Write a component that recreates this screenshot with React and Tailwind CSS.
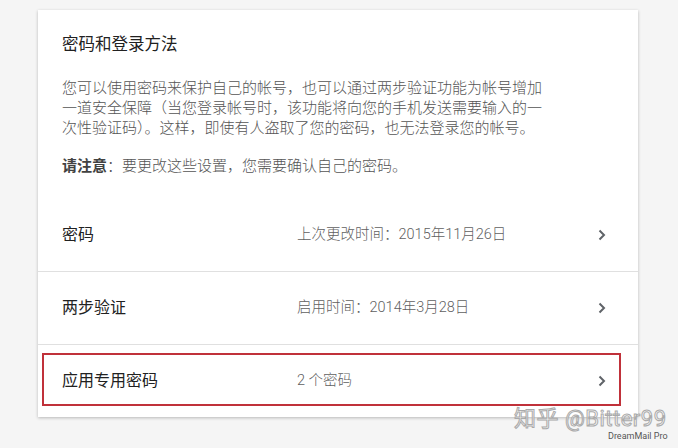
const font = { fontFamily: 'Roboto, "Noto Sans CJK SC", sans-serif' };

const Chevron = () => (
  <svg width="8" height="12" viewBox="0 0 8 12" className="text-[#5f6368]">
    <path d="M1.5 1.5 L6 6 L1.5 10.5" fill="none" stroke="currentColor" strokeWidth="2" />
  </svg>
);

const Row = ({ label, value, first, children }) => (
  <div
    className={
      'relative flex items-center h-[73px] pl-6 pr-[32px] ' +
      (first ? '' : 'border-t border-[#e0e0e0]')
    }
  >
    <div className="w-[235px] text-[16px] text-[#212121]">{label}</div>
    <div className="flex-1 text-[14.5px] font-light text-[#5f5f5f]">{value}</div>
    <Chevron />
    {children}
  </div>
);

const App = () => {
  return (
    <div
      className="relative w-[678px] h-[448px] bg-[#f5f5f5] pt-[10px] pl-[38px] overflow-hidden"
      style={font}
    >
      <div className="w-[600px] h-[407px] bg-white shadow-[0_1px_3px_rgba(0,0,0,0.25)] flex flex-col">
        <div className="px-6 pt-[23px] h-[188px]">
          <h2 className="text-[16.5px] leading-6 text-[#212121]">密码和登录方法</h2>
          <p className="mt-[21px] w-[490px] text-[15px] leading-5 font-light text-[#555]">
            您可以使用密码来保护自己的帐号，也可以通过两步验证功能为帐号增加一道安全保障（当您登录帐号时，该功能将向您的手机发送需要输入的一次性验证码）。这样，即使有人盗取了您的密码，也无法登录您的帐号。
          </p>
          <p className="mt-[18px] text-[15px] leading-5 font-light text-[#555]">
            <span className="font-bold text-[#424242]">请注意</span>：要更改这些设置，您需要确认自己的密码。
          </p>
        </div>
        <Row first label="密码" value="上次更改时间：2015年11月26日" />
        <Row label="两步验证" value="启用时间：2014年3月28日" />
        <Row label="应用专用密码" value="2 个密码">
          <div className="absolute left-[4px] right-[17px] top-[8px] bottom-[11px] border-2 border-[#c0313a]" />
        </Row>
      </div>
      <div className="absolute left-[514px] top-[407px] text-[22px] leading-6 text-white/70 [-webkit-text-stroke:1px_#aaaaaa] tracking-[0.5px]">
        知乎 @Bitter99
      </div>
      <div className="absolute left-[608px] top-[430px] text-[9px] leading-3 text-[#555]">
        DreamMail Pro
      </div>
    </div>
  );
};

export default App;
